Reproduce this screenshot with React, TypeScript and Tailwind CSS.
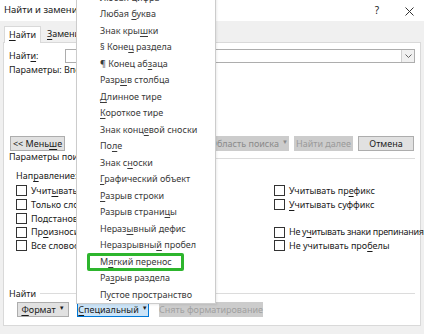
import React from "react";

const U = ({ children }: { children: React.ReactNode }) => <span className="underline underline-offset-[1.5px]">{children}</span>;

function Check({ children, className = "" }: { children: React.ReactNode; className?: string }) {
  return (
    <div className="flex items-center h-[13.75px] whitespace-nowrap">
      <div className="w-[11px] h-[11px] border border-[#333] bg-white mr-[4px] shrink-0" />
      <span className={className}>{children}</span>
    </div>
  );
}

function Btn({ children, className = "" }: { children: React.ReactNode; className?: string }) {
  return (
    <div className={"h-[15px] flex items-center justify-center border whitespace-nowrap " + className}>{children}</div>
  );
}

const Caret = () => <span className="text-[6px] ml-[3px] relative top-[-1px]">▼</span>;

const menuItems: React.ReactNode[] = [
  <>Любая цифра</>,
  <>Любая <U>б</U>уква</>,
  <>Знак кры<U>ш</U>ки</>,
  <>§ Коне<U>ц</U> раздела</>,
  <>¶ Конец аб<U>з</U>аца</>,
  <>Разр<U>ы</U>в столбца</>,
  <><U>Д</U>линное тире</>,
  <><U>К</U>ороткое тире</>,
  <>Знак конц<U>е</U>вой сноски</>,
  <>По<U>л</U>е</>,
  <>Знак с<U>н</U>оски</>,
  <><U>Г</U>рафический объект</>,
  <><U>Р</U>азрыв строки</>,
  <>Разрыв страни<U>ц</U>ы</>,
  <>Нераз<U>ы</U>вный дефис</>,
  <>Неразрывны<U>й</U> пробел</>,
  <>М<U>я</U>гкий перенос</>,
  <>Ра<U>з</U>рыв раздела</>,
  <>П<U>у</U>стое пространство</>,
];

export default function App() {
  return (
    <div
      className="relative w-[424px] h-[334px] overflow-hidden bg-white text-[9px] text-[#1a1a1a] flex flex-col"
      style={{ fontFamily: '"Noto Sans", "Open Sans", sans-serif' }}
    >
      {/* Title bar */}
      <div className="h-[21px] flex items-center pl-[4px] pr-[10px] shrink-0">
        <span className="text-[9.5px]">Найти и заменить</span>
        <span className="ml-auto mr-[26px] text-[10px]">?</span>
        <svg width="9" height="9" viewBox="0 0 9 9" className="mt-[1px]">
          <path d="M0.5 0.5 L8.5 8.5 M8.5 0.5 L0.5 8.5" stroke="#333" strokeWidth="1" />
        </svg>
      </div>

      {/* Gray body */}
      <div className="flex-1 bg-[#f0f0f0] flex flex-col px-[3px] pb-[8px]">
        {/* Tabs */}
        <div className="h-[21px] flex items-end pl-[1px] shrink-0">
          <div className="h-[17px] w-[37px] bg-white border border-b-0 border-[#d9d9d9] flex items-center justify-center relative top-[1px]">
            <span><U>Н</U>айти</span>
          </div>
          <div className="h-[17px] flex items-center ml-[6px]">
            <span><U>З</U>аменить</span>
          </div>
        </div>

        {/* Panel */}
        <div className="flex-1 min-h-0 bg-white border border-[#d9d9d9] flex flex-col pl-[5px] pr-[5px] pt-[6px]">
          <div className="flex items-center h-[14px]">
            <span className="w-[56px]">Найт<U>и</U>:</span>
            <div className="flex-1 h-[14px] border border-[#adadad] flex justify-end">
              <div className="w-[13px] h-full border-l border-[#cfcfcf] bg-[#f0f0f0] flex items-center justify-center">
                <svg width="7" height="4" viewBox="0 0 7 4">
                  <path d="M0.5 0.5 L3.5 3.5 L6.5 0.5" stroke="#555" strokeWidth="0.9" fill="none" />
                </svg>
              </div>
            </div>
          </div>
          <div className="flex items-center h-[14px]">
            <span className="w-[55px]">Параметры:</span>
            <span>Вперед</span>
          </div>

          {/* Buttons row */}
          <div className="flex items-center mt-[59px] h-[15px]">
            <Btn className="w-[55px] ml-[1px] bg-[#e1e1e1] border-[#adadad]"><span>&lt;&lt; Мень<U>ш</U>е</span></Btn>
            <div className="ml-auto flex gap-[5px] mr-[1px]">
              <Btn className="w-[80px] bg-[#cccccc] border-[#cccccc] text-[#8a8a8a]"><span>Область поиска</span><Caret /></Btn>
              <Btn className="w-[59px] bg-[#cccccc] border-[#cccccc] text-[#9a9a9a]">Найти далее</Btn>
              <Btn className="w-[56px] bg-[#e1e1e1] border-[#adadad]">Отмена</Btn>
            </div>
          </div>

          {/* Section header */}
          <div className="flex items-center h-[12px]">
            <span className="mr-[4px] whitespace-nowrap">Параметры поиска</span>
            <div className="flex-1 h-px bg-[#dcdcdc] mt-[3px]" />
          </div>
          <div className="pl-[7px] mt-[6px] h-[14px] flex items-center">
            <span>Нап<U>р</U>авление:</span>
          </div>

          <div className="grid grid-cols-[258px_1fr] pl-[7px] mt-[1px]">
            <div className="flex flex-col">
              <Check>Учит<U>ы</U>вать регистр</Check>
              <Check>Только слово целиком</Check>
              <Check>Подстановочные знаки</Check>
              <Check>Пр<U>о</U>износится как</Check>
              <Check>Все словоформы</Check>
            </div>
            <div className="flex flex-col">
              <Check>Учитывать пр<U>е</U>фикс</Check>
              <Check><U>У</U>читывать суффикс</Check>
              <div className="h-[13.75px]" />
              <Check className="tracking-[-0.3px]">Не у<U>ч</U>итывать знаки препинания</Check>
              <Check>Не учитывать про<U>б</U>елы</Check>
            </div>
          </div>

          <div className="flex items-center h-[12px] mt-[35px]">
            <span className="mr-[4px]">Найти</span>
            <div className="flex-1 h-px bg-[#dcdcdc]" />
          </div>
          <div className="flex items-center gap-[8px] pl-[8px] mt-[2px]">
            <Btn className="w-[52px] bg-[#e1e1e1] border-[#adadad]"><span><U>Ф</U>ормат</span><Caret /></Btn>
            <Btn className="w-[72px] bg-[#cce4f7] border-[#0078d7]"><span><U>С</U>пециальный</span><Caret /></Btn>
            <Btn className="w-[104px] ml-[2px] bg-[#cccccc] border-[#cccccc] text-[#a0a0a0]">Снять форматирование</Btn>
          </div>
        </div>
      </div>

      {/* Dropdown menu */}
      <div className="absolute left-[76px] top-[-12px] w-[140px] bg-white border border-[#cccccc] text-[#3a3a3a] shadow-[1px_1px_2px_rgba(0,0,0,0.08)]">
        {menuItems.map((m, i) => (
          <div key={i} className="relative h-[16.5px] flex items-center pl-[23px] whitespace-nowrap">
            <span>{m}</span>
            {i === 16 && (
              <div className="absolute left-[10px] top-[0px] w-[97px] h-[18px] border-[3px] border-[#2db52d] rounded-[2px]" />
            )}
          </div>
        ))}
      </div>
    </div>
  );
}
